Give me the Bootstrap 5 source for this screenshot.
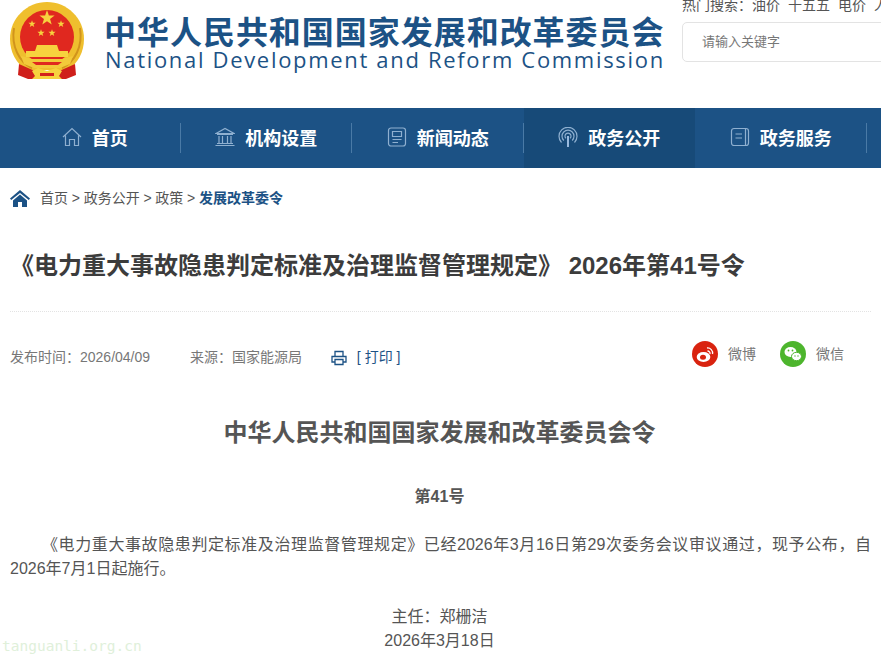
<!DOCTYPE html>
<html lang="zh-CN">
<head>
  <meta charset="UTF-8"/>
  <title>《电力重大事故隐患判定标准及治理监督管理规定》 2026年第41号令</title>
  <link href="https://cdn.jsdelivr.net/npm/bootstrap@5.3.0/dist/css/bootstrap.min.css" rel="stylesheet"/>
  <style>
    html,body{height:654px;overflow:hidden;}
    body{position:relative;background:#fff;color:#555;font-family:"Liberation Sans","Noto Sans CJK SC",sans-serif;font-size:16px;}
    .site-head{height:108px;padding-left:10px;overflow:hidden;}
    .emblem{width:74px;height:82px;flex:none;}
    .brand-box{margin-left:21px;margin-top:12px;width:560px;flex:none;color:#1c5285;white-space:nowrap;}
    .brand-cn{font-family:"Noto Sans CJK SC",sans-serif;font-weight:700;font-size:32px;line-height:36px;letter-spacing:.97px;margin-left:-1px;}
    .brand-en{font-family:"Open Sans",sans-serif;font-size:22px;line-height:23px;letter-spacing:1.68px;}
    .search-box{margin-left:17px;flex:none;width:300px;white-space:nowrap;}
    .hot-words{font-size:14px;line-height:20px;margin-top:-5px;color:#555;}
    .hot-words span{margin-right:8px;}
    .search-input{width:300px;height:40px;margin-top:7px;border:1px solid #e3e3e3;border-radius:5px;padding-left:19px;font-size:13px;line-height:38px;color:#777;}
    .main-nav{height:60px;background:#1c5285;padding-left:9px;}
    .main-nav .nav-cell{width:171.5px;flex:none;height:60px;padding-bottom:2px;display:flex;align-items:center;justify-content:center;position:relative;color:#fff;font-weight:700;font-size:18px;font-family:"Noto Sans CJK SC",sans-serif;text-decoration:none;gap:10px;}
    .main-nav .nav-cell::after{content:"";position:absolute;right:0;top:15px;height:30px;width:1px;background:#4a7aa6;}
    .main-nav .nav-cell.on{background:#174a78;}
    .main-nav .nav-cell.on::after{display:none;}
    .main-nav svg{width:20px;height:20px;flex:none;fill:none;stroke:#8fb0d0;stroke-width:1.2;}
    .crumb-row{height:60px;padding-left:10px;font-size:14px;color:#555;gap:10px;word-spacing:-.15px;}
    .crumb-row b{color:#1c5285;}
    .art-title{margin:0 10px;height:83px;padding-top:20px;font-family:"Liberation Sans","Noto Sans CJK SC",sans-serif;font-size:24px;font-weight:700;line-height:36px;color:#3c3c3c;white-space:nowrap;}
    .art-info{margin:0 10px;border-top:1px dotted #e3e3e3;height:102px;font-size:14px;color:#777;}
    .art-info .pub{padding-top:35px;line-height:20px;white-space:nowrap;}
    .source-text{margin-left:36px;}
    .print-link{color:#1c5285;margin-left:25px;}
    .print-link svg{width:16px;height:16px;margin-right:10px;vertical-align:-4px;}
    .share-box{padding-top:29px;padding-right:27px;gap:24px;height:60px;color:#777;font-size:14px;}
    .share-item{gap:10px;height:26px;}
    .share-item svg{width:26px;height:26px;}
    .doc-body{margin:0 10px;color:#555;font-size:16px;line-height:24px;}
    .doc-title{font-family:"Noto Sans CJK SC",sans-serif;font-size:24px;font-weight:700;color:#555;text-align:center;line-height:36px;margin:0 2px 0 0;}
    .doc-no{font-weight:700;text-align:center;margin:0 2px 0 0;padding-top:36px;}
    .doc-para{text-indent:2em;margin:0;padding-top:24px;text-align:justify;}
    .doc-sign{text-align:center;padding-top:24px;margin:0 2px 0 0;}
    .water-mark{position:absolute;left:2px;bottom:0;font-family:"DejaVu Sans Mono",monospace;font-size:14.5px;line-height:16px;color:#e0f0da;}
  </style>
</head>
<body>
<header class="site-head d-flex">
  <svg class="emblem" viewBox="0 0 74 82">
    <defs><polygon id="st" points="0,-10 2.350,-3.240 9.510,-3.090 3.800,1.240 5.880,8.090 0,4 -5.880,8.090 -3.800,1.240 -9.510,-3.090 -2.350,-3.240"/></defs>
    <path d="M37 2C17 2 0 18 0 39C0 52 6 63 16 70H58C68 63 74 52 74 39C74 18 57 2 37 2Z" fill="#efbf2e"/>
    <path d="M4 28C1 46 9 62 22 68M70 28C73 46 65 62 52 68" fill="none" stroke="#d1941c" stroke-width="2"/>
    <circle cx="37" cy="37" r="27" fill="#e0281f"/>
    <g fill="#f7d23e">
      <use href="#st" transform="translate(37 18) scale(.8)"/>
      <use href="#st" transform="translate(22 24) scale(.38)"/>
      <use href="#st" transform="translate(51 24) scale(.38)"/>
      <use href="#st" transform="translate(31 33) scale(.38)"/>
      <use href="#st" transform="translate(42 33) scale(.38)"/>
      <path d="M27 45H47L49 51H58V57H16V51H25Z"/>
    </g>
    <path fill="#f3c93a" d="M11 56 22 59H52L63 56 60 64 50 68H24L14 64Z"/>
    <path fill="#e0281f" d="M22 62H52L48 65H26Z"/>
    <path fill="#cf1f1b" d="M9 64 18 68 27 72H47L56 68 65 64 66 75 56 79H18L8 75Z"/>
    <path fill="#f7d23e" d="M22 71 28 68 37 71 46 68 52 71 49 76 52 79H22L25 76Z"/>
    <path fill="#d3201c" d="M30 73H44V76H30Z"/>
  </svg>
  <div class="brand-box">
    <div class="brand-cn">中华人民共和国国家发展和改革委员会</div>
    <div class="brand-en">National Development and Reform Commission</div>
  </div>
  <div class="search-box">
    <div class="hot-words">热门搜索：<span>油价</span><span>十五五</span><span>电价</span><span>人工智能</span></div>
    <div class="search-input">请输入关键字</div>
  </div>
</header>
<nav class="main-nav d-flex">
  <a class="nav-cell" href="#"><svg viewBox="0 0 20 20"><path d="M1 10 10 1.500 19 10M3.500 8.500V18.500H7.500V12.500H12.500V18.500H16.500V8.500"/></svg>首页</a>
  <a class="nav-cell" href="#"><svg viewBox="0 0 20 20"><path d="M1 6.500 10 1.500 19 6.500ZM2 7.500H18M4 9V16M7.500 9V16M12.500 9V16M16 9V16M2 16.500H18M0.500 18.500H19.500"/></svg>机构设置</a>
  <a class="nav-cell" href="#"><svg viewBox="0 0 20 20"><rect x="1.500" y="1" width="17" height="18" rx="2.500"/><path d="M5.500 4.500H14.500V9.500H5.500ZM5.500 12.500H14.500M5.500 15.500H11"/></svg>新闻动态</a>
  <a class="nav-cell on" href="#"><svg viewBox="0 0 20 20"><path d="M3.500 15.500A9 9 0 1 1 16.500 15.500M5.800 13.500A6 6 0 1 1 14.200 13.500M8 11.300A3 3 0 1 1 12 11.300"/><path d="M10 9V20" stroke="#a9c8ea" stroke-width="1.800"/></svg>政务公开</a>
  <a class="nav-cell" href="#"><svg viewBox="0 0 20 20"><rect x="1.500" y="1.500" width="17" height="17" rx="2.500"/><path d="M5.500 7H12M5.500 11H12M15.500 1.500V18.500"/></svg>政务服务</a>
</nav>
<div class="crumb-row d-flex align-items-center">
  <svg width="20" height="17" viewBox="0 0 20 17"><path fill="#1c5285" d="M10 0 20 8.500 18.800 10 10 3 1.200 10 0 8.500ZM3 10.500 10 4.500 17 10.500V17H12V12H8V17H3Z"/></svg>
  <div>首页 &gt; 政务公开 &gt; 政策 &gt; <b>发展改革委令</b></div>
</div>
<h1 class="art-title">《电力重大事故隐患判定标准及治理监督管理规定》 2026年第41号令</h1>
<div class="art-info">
  <div class="d-flex justify-content-between">
    <div class="pub">
      <span>发布时间：2026/04/09</span>
      <span class="source-text">来源：国家能源局</span>
      <span class="print-link"><svg viewBox="0 0 16 16" fill="none" stroke="#1c5285" stroke-width="1.300"><path d="M4 6V1.500H12V6M4 12H1V6.500H15V12H12"/><path d="M4 9.500H12V14.500H4Z"/></svg>[ 打印 ]</span>
    </div>
    <div class="share-box d-flex">
      <div class="share-item d-flex align-items-center">
        <svg viewBox="0 0 26 26"><circle cx="13" cy="13" r="13" fill="#d9230f"/><ellipse cx="11.500" cy="16" rx="6.800" ry="5" fill="#fff"/><ellipse cx="11" cy="16.300" rx="3" ry="2.500" fill="#d9230f"/><path d="M15 7a5 5 0 0 1 5.500 6M15.500 10a2.500 2.500 0 0 1 2.500 3" fill="none" stroke="#fff" stroke-width="1.300"/></svg>
        <span>微博</span>
      </div>
      <div class="share-item d-flex align-items-center">
        <svg viewBox="0 0 26 26"><circle cx="13" cy="13" r="13" fill="#4db52d"/><ellipse cx="10.500" cy="11" rx="6" ry="5" fill="#fff"/><ellipse cx="16.500" cy="15.500" rx="5" ry="4.200" fill="#fff" stroke="#4db52d"/><circle cx="8.500" cy="9.500" r=".9" fill="#4db52d"/><circle cx="12.500" cy="9.500" r=".9" fill="#4db52d"/><circle cx="15" cy="15" r=".7" fill="#4db52d"/><circle cx="18" cy="15" r=".7" fill="#4db52d"/></svg>
        <span>微信</span>
      </div>
    </div>
  </div>
</div>
<main class="doc-body">
  <h2 class="doc-title">中华人民共和国国家发展和改革委员会令</h2>
  <p class="doc-no">第41号</p>
  <p class="doc-para">《电力重大事故隐患判定标准及治理监督管理规定》已经2026年3月16日第29次委务会议审议通过，现予公布，自2026年7月1日起施行。</p>
  <p class="doc-sign">主任：郑栅洁<br/>2026年3月18日</p>
</main>
<div class="water-mark">tanguanli.org.cn</div>
<script src="https://cdn.jsdelivr.net/npm/bootstrap@5.3.0/dist/js/bootstrap.bundle.min.js"></script>
</body>
</html>
